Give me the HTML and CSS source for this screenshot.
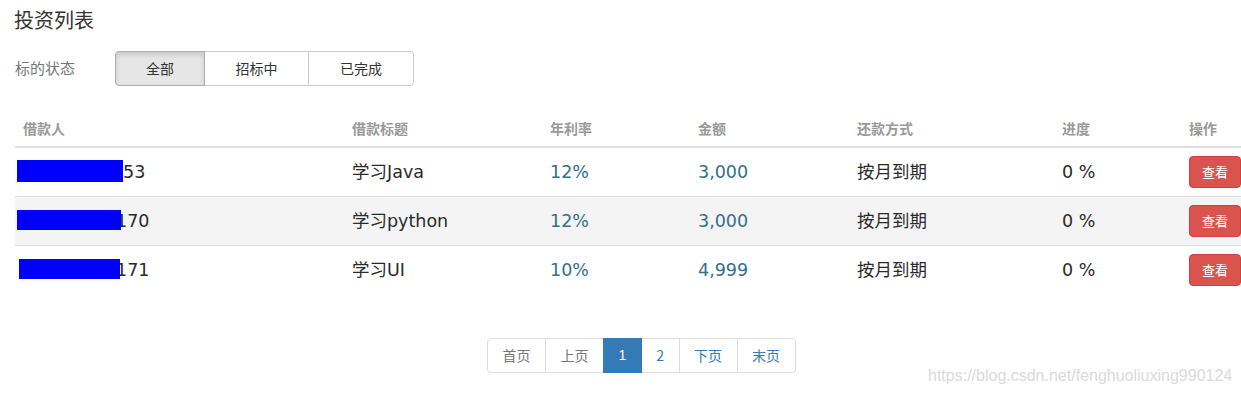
FILE: index.html
```html
<!DOCTYPE html>
<html lang="zh-CN">
<head>
<meta charset="utf-8">
<title>投资列表</title>
<link rel="stylesheet" href="styles.css">
</head>
<body>
<div class="page">
  <h4 class="title">投资列表</h4>
  <div class="filter">
    <span class="filter-label">标的状态</span>
    <div class="btn-group">
      <button class="btn active">全部</button>
      <button class="btn">招标中</button>
      <button class="btn">已完成</button>
    </div>
  </div>
  <table class="list">
    <colgroup>
      <col class="c1"><col class="c2"><col class="c3"><col class="c4"><col class="c5"><col class="c6"><col class="c7">
    </colgroup>
    <thead>
      <tr><th>借款人</th><th>借款标题</th><th>年利率</th><th>金额</th><th>还款方式</th><th>进度</th><th class="last">操作</th></tr>
    </thead>
    <tbody>
      <tr>
        <td><span class="mask m1"></span>53</td>
        <td>学习Java</td>
        <td class="num">12%</td>
        <td class="num">3,000</td>
        <td>按月到期</td>
        <td>0 %</td>
        <td class="last"><button class="btn-view">查看</button></td>
      </tr>
      <tr class="odd">
        <td><span class="mask m2"></span>170</td>
        <td>学习python</td>
        <td class="num">12%</td>
        <td class="num">3,000</td>
        <td>按月到期</td>
        <td>0 %</td>
        <td class="last"><button class="btn-view">查看</button></td>
      </tr>
      <tr>
        <td><span class="mask m3"></span>171</td>
        <td>学习UI</td>
        <td class="num">10%</td>
        <td class="num">4,999</td>
        <td>按月到期</td>
        <td>0 %</td>
        <td class="last"><button class="btn-view">查看</button></td>
      </tr>
    </tbody>
  </table>
  <ul class="pager">
    <li class="disabled"><a>首页</a></li>
    <li class="disabled"><a>上页</a></li>
    <li class="current"><a>1</a></li>
    <li><a>2</a></li>
    <li><a>下页</a></li>
    <li><a>末页</a></li>
  </ul>
</div>
<div class="watermark">https://blog.csdn.net/fenghuoliuxing990124</div>
</body>
</html>
```

FILE: styles.css
```css
html, body {
  margin: 0;
  padding: 0;
  background: #fff;
}
body {
  font-family: "Noto Sans CJK SC", "DejaVu Sans", sans-serif;
  color: #333;
  width: 1241px;
  height: 394px;
  overflow: hidden;
  position: relative;
}
.page {
  padding-left: 15px;
}
.title {
  margin: 8px 0 0 -1px;
  font-size: 20px;
  line-height: 24px;
  font-weight: 400;
  color: #333;
}
.filter {
  display: flex;
  align-items: center;
  margin-top: 19px;
}
.filter-label {
  width: 100px;
  font-size: 15px;
  line-height: 20px;
  color: #777;
  margin-top: -2px;
}
.btn-group {
  display: flex;
}
.btn {
  font-family: "Noto Sans CJK SC", sans-serif;
  font-size: 14px;
  line-height: 21px;
  padding: 6px 30.5px;
  background: #fff;
  border: 1px solid #ccc;
  color: #333;
  margin: 0 0 0 -1px;
  border-radius: 0;
}
.btn:first-child {
  margin-left: 0;
  padding: 6px 30px;
  border-radius: 4px 0 0 4px;
}
.btn:last-child {
  padding: 6px 31px;
  border-radius: 0 4px 4px 0;
}
.btn.active {
  background: #e6e6e6;
  border-color: #adadad;
  box-shadow: inset 0 3px 5px rgba(0, 0, 0, 0.125);
  position: relative;
  z-index: 1;
}
.list {
  margin-top: 24px;
  width: 1226px;
  border-collapse: collapse;
  table-layout: fixed;
}
.c1 { width: 329px; }
.c2 { width: 198px; }
.c3 { width: 148px; }
.c4 { width: 159px; }
.c5 { width: 205px; }
.c6 { width: 127px; }
.c7 { width: 60px; }
.list th {
  text-align: left;
  font-size: 14px;
  font-weight: 700;
  color: #999;
  line-height: 20px;
  padding: 8px 8px;
  border-bottom: 2px solid #ddd;
}
.list td {
  height: 32px;
  padding: 8px 8px;
  border-top: 1px solid #ddd;
  font-family: "DejaVu Sans", "Noto Sans CJK SC", sans-serif;
  font-size: 17.5px;
  line-height: 24px;
  color: #2a2a2a;
  vertical-align: middle;
  white-space: nowrap;
}
.list tbody tr:first-child td {
  border-top: 0;
}
.list tr.odd td {
  background: #f4f4f4;
}
.list .last {
  padding-right: 0;
}
.list td.num {
  color: #31708f;
}
.mask {
  display: inline-block;
  background: #0000ff;
  vertical-align: middle;
  position: relative;
}
.m1 { width: 106px; height: 22px; margin-left: -6px; margin-top: -5px; }
.m2 { width: 104px; height: 20px; margin-left: -6px; margin-right: -5px; margin-top: -4px; }
.m3 { width: 101px; height: 20px; margin-left: -4px; margin-right: -4px; margin-top: -4px; }
.btn-view {
  font-family: "Noto Sans CJK SC", sans-serif;
  font-size: 13px;
  line-height: 18px;
  padding: 6px 12px;
  width: 52px;
  color: #fff;
  background: #d9534f;
  border: 1px solid #d43f3a;
  border-radius: 4px;
}
.pager {
  list-style: none;
  display: flex;
  margin: 44px 0 0 472px;
  padding: 0;
}
.pager li a {
  display: block;
  font-family: "Noto Sans CJK SC", "Liberation Sans", sans-serif;
  font-size: 14px;
  line-height: 21px;
  padding: 6px 14.5px;
  border: 1px solid #ddd;
  margin-left: -1px;
  color: #337ab7;
  background: #fff;
}
.pager li:first-child a {
  margin-left: 0;
  border-radius: 4px 0 0 4px;
}
.pager li:last-child a {
  border-radius: 0 4px 4px 0;
}
.pager li.disabled a {
  color: #777;
}
.pager li.current a {
  background: #337ab7;
  border-color: #337ab7;
  color: #fff;
  position: relative;
  z-index: 1;
  font-family: "Liberation Sans", sans-serif;
}
.watermark {
  position: absolute;
  left: 928px;
  top: 365px;
  font-family: "Liberation Sans", sans-serif;
  font-size: 16px;
  line-height: 22px;
  color: #dadada;
  white-space: nowrap;
}
```
